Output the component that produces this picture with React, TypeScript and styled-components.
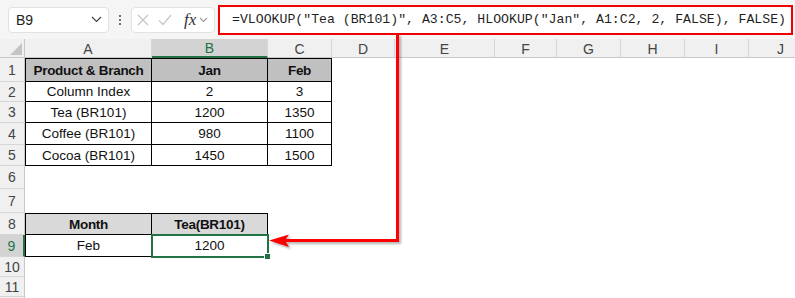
import React from 'react';
import styled, { createGlobalStyle, css } from 'styled-components';

const GlobalStyle = createGlobalStyle`
  html, body {
    margin: 0;
    padding: 0;
    background: #ffffff;
  }
  body {
    font-family: 'Liberation Sans', Arial, sans-serif;
    overflow: hidden;
  }
`;

const green = '#217346';

const Page = styled.div`
  position: relative;
  width: 795px;
  height: 298px;
  overflow: hidden;
  background: #ffffff;
`;

const Toolbar = styled.div`
  height: 39px;
  background: #f5f5f5;
  display: flex;
  align-items: center;
  padding-left: 8px;
  box-sizing: border-box;
`;

const NameBox = styled.div`
  width: 101px;
  height: 26px;
  box-sizing: border-box;
  background: #ffffff;
  border: 1px solid #e1e1e1;
  border-radius: 4px;
  display: flex;
  align-items: center;
  justify-content: space-between;
  padding: 0 6px 0 7px;
  font-size: 14px;
  color: #222;
`;

const Dots = styled.div`
  width: 22px;
  display: flex;
  flex-direction: column;
  align-items: center;
  gap: 2px;
  span {
    width: 2px;
    height: 2px;
    background: #444;
    border-radius: 1px;
  }
`;

const FxBox = styled.div`
  width: 84px;
  height: 26px;
  box-sizing: border-box;
  background: #ffffff;
  border: 1px solid #e3e3e3;
  border-radius: 4px;
  display: flex;
  align-items: center;
  padding-left: 5px;
  gap: 9px;
`;

const FxLabel = styled.span`
  font-family: 'Liberation Serif', 'DejaVu Serif', serif;
  font-style: italic;
  font-size: 17px;
  color: #333;
  margin-left: 3px;
  margin-right: -6px;
  line-height: 1;
`;

const FormulaBox = styled.div`
  margin-left: 3px;
  width: 575px;
  height: 30px;
  box-sizing: border-box;
  border: 2px solid #f00000;
  background: #ffffff;
  display: flex;
  align-items: center;
  padding-left: 12px;
  font-family: 'Liberation Mono', 'DejaVu Sans Mono', monospace;
  font-size: 13.2px;
  color: #1f1f1f;
  white-space: pre;
`;

const Sheet = styled.div`
  display: grid;
  grid-template-columns: 25px 127px 116px 64px 63px 100px 62px 64px 64px 64px 64px;
  grid-template-rows: 19px 24px 20px 21px 22px 21px 23px 24px 22px 22px 20px 20px 20px;
  width: 813px;
  font-size: 13.5px;
  color: #111;
`;

const headerBase = css`
  background: #f0f0f0;
  color: #444;
  font-size: 14px;
  display: flex;
  align-items: center;
  justify-content: center;
  box-sizing: border-box;
`;

const Corner = styled.div`
  ${headerBase};
  position: relative;
  border-right: 1px solid #c8c8c8;
  border-bottom: 1px solid #c8c8c8;
  &::after {
    content: '';
    position: absolute;
    right: 2px;
    bottom: 2px;
    border-style: solid;
    border-width: 0 0 12px 12px;
    border-color: transparent transparent #c4c4c4 transparent;
  }
`;

const ColHead = styled.div<{ $active?: boolean }>`
  ${headerBase};
  padding-top: 1px;
  border-right: 1px solid #d6d6d6;
  border-bottom: 1px solid #c8c8c8;
  ${p =>
    p.$active &&
    css`
      background: #d3d3d3;
      color: ${green};
      border-bottom: 2px solid ${green};
    `}
`;

const RowHead = styled.div<{ $active?: boolean }>`
  ${headerBase};
  border-right: 1px solid #c8c8c8;
  border-bottom: 1px solid #d6d6d6;
  ${p =>
    p.$active &&
    css`
      background: #d3d3d3;
      color: ${green};
      border-right: 2px solid ${green};
    `}
`;

const Cell = styled.div<{
  $fill?: string;
  $bold?: boolean;
  $top?: boolean;
  $left?: boolean;
  $boxed?: boolean;
  $selected?: boolean;
}>`
  box-sizing: border-box;
  display: flex;
  align-items: center;
  justify-content: center;
  white-space: nowrap;
  background: ${p => p.$fill || '#ffffff'};
  font-weight: ${p => (p.$bold ? 700 : 400)};
  letter-spacing: ${p => (p.$bold ? '-0.3px' : '0')};
  ${p =>
    p.$boxed &&
    css`
      border-right: 1px solid #000;
      border-bottom: 1px solid #000;
    `}
  ${p => p.$top && 'border-top: 1px solid #000;'}
  ${p => p.$left && 'border-left: 1px solid #000;'}
  ${p =>
    p.$selected &&
    css`
      position: relative;
      z-index: 1;
      outline: 2px solid ${green};
      outline-offset: -1px;
      &::after {
        content: '';
        position: absolute;
        right: -4px;
        bottom: -4px;
        width: 5px;
        height: 5px;
        background: ${green};
        border: 1px solid #ffffff;
      }
    `}
`;

const Arrow = styled.svg`
  position: absolute;
  left: 0;
  top: 0;
  pointer-events: none;
  filter: drop-shadow(2px 2px 1px rgba(0, 0, 0, 0.3));
`;

type Kind = 'head' | 'head2' | 'data';

interface CellSpec {
  text: string;
  kind: Kind;
}

const columns = ['A', 'B', 'C', 'D', 'E', 'F', 'G', 'H', 'I', 'J'];

const row = (kind: Kind, ...texts: string[]): CellSpec[] =>
  texts.map(text => ({ text, kind }));

const rows: CellSpec[][] = [
  row('head', 'Product & Branch', 'Jan', 'Feb'),
  row('data', 'Column Index', '2', '3'),
  row('data', 'Tea (BR101)', '1200', '1350'),
  row('data', 'Coffee (BR101)', '980', '1100'),
  row('data', 'Cocoa (BR101)', '1450', '1500'),
  [],
  [],
  row('head2', 'Month', 'Tea(BR101)'),
  row('data', 'Feb', '1200'),
  [],
  [],
  [],
];

const fills: Record<Kind, string> = {
  head: '#c0c0c0',
  head2: '#d9d9d9',
  data: '#ffffff',
};

const formula =
  '=VLOOKUP("Tea (BR101)", A3:C5, HLOOKUP("Jan", A1:C2, 2, FALSE), FALSE)';

const App = () => {
  return (
    <Page>
      <GlobalStyle />
      <Toolbar>
        <NameBox>
          <span>B9</span>
          <svg width="11" height="7" viewBox="0 0 11 7">
            <path d="M1 1l4.5 4.5L10 1" fill="none" stroke="#444" strokeWidth="1.2" />
          </svg>
        </NameBox>
        <Dots>
          <span />
          <span />
          <span />
        </Dots>
        <FxBox>
          <svg width="12" height="12" viewBox="0 0 12 12">
            <path d="M1 1l10 10M11 1L1 11" stroke="#c6c6c6" strokeWidth="1.2" />
          </svg>
          <svg width="14" height="12" viewBox="0 0 14 12">
            <path d="M1 6.5l4 4L13 1" fill="none" stroke="#c6c6c6" strokeWidth="1.2" />
          </svg>
          <FxLabel>fx</FxLabel>
          <svg width="9" height="6" viewBox="0 0 9 6">
            <path d="M1 1l3.5 3.5L8 1" fill="none" stroke="#9a9a9a" strokeWidth="1.1" />
          </svg>
        </FxBox>
        <FormulaBox>{formula}</FormulaBox>
      </Toolbar>
      <Sheet>
        <Corner />
        {columns.map(c => (
          <ColHead key={c} $active={c === 'B'}>
            {c}
          </ColHead>
        ))}
        {rows.map((cells, r) => {
          const num = r + 1;
          const firstOfTable = num === 1 || num === 8;
          // row 12 only peeks in at the bottom edge, so its number stays hidden
          const label = num < 12 ? num : '';
          return (
            <React.Fragment key={num}>
              <RowHead $active={num === 9}>{label}</RowHead>
              {columns.map((c, ci) => {
                const spec = cells[ci];
                if (!spec) return <Cell key={c} />;
                return (
                  <Cell
                    key={c}
                    $boxed
                    $fill={fills[spec.kind]}
                    $bold={spec.kind !== 'data'}
                    $top={firstOfTable}
                    $left={ci === 0}
                    $selected={num === 9 && c === 'B'}
                  >
                    {spec.text}
                  </Cell>
                );
              })}
            </React.Fragment>
          );
        })}
      </Sheet>
      <Arrow width="795" height="298" viewBox="0 0 795 298">
        <polyline
          points="397.5,34 397.5,240.5 284,240.5"
          fill="none"
          stroke="#ff0000"
          strokeWidth="3"
        />
        <polygon points="269,240.5 289,234.5 285,240.5 289,247" fill="#ff0000" />
      </Arrow>
    </Page>
  );
};

export default App;
